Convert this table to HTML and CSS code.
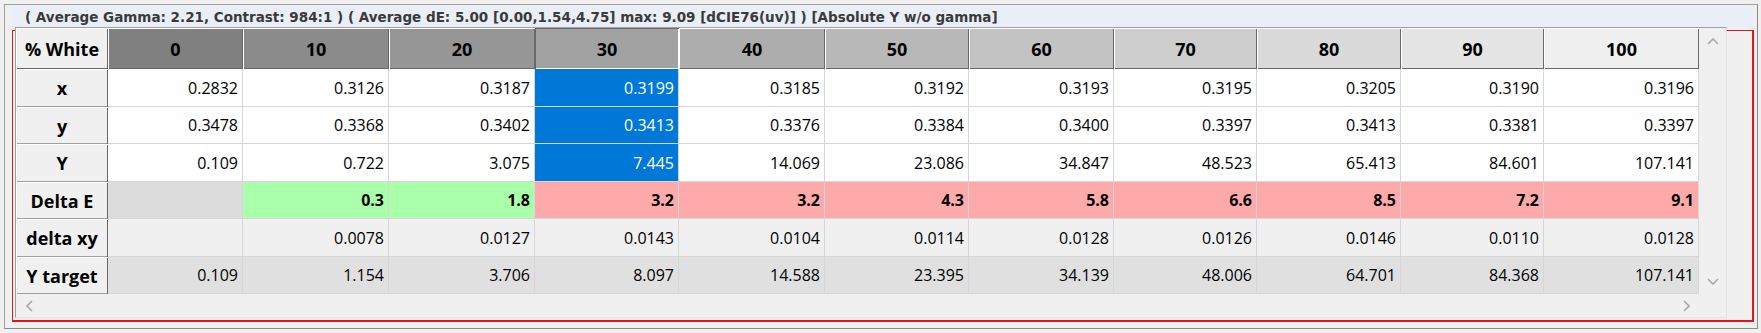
FILE: index.html
```html
<!DOCTYPE html>
<html>
<head>
<meta charset="utf-8">
<link rel="stylesheet" href="styles.css">
</head>
<body>
<div class="window">
  <div class="band">( Average Gamma: 2.21, Contrast: 984:1 ) ( Average dE: 5.00 [0.00,1.54,4.75] max: 9.09 [dCIE76(uv)] ) [Absolute Y w/o gamma]</div>
  <div class="redbox">
    <div class="tablewidget">
      <div class="grid">
        <div class="c corner-h">% White</div>
        <div class="c h g0">0</div>
        <div class="c h g1">10</div>
        <div class="c h g2">20</div>
        <div class="c h g3 sunk">30</div>
        <div class="c h g4">40</div>
        <div class="c h g5">50</div>
        <div class="c h g6">60</div>
        <div class="c h g7">70</div>
        <div class="c h g8">80</div>
        <div class="c h g9">90</div>
        <div class="c h g10">100</div>

        <div class="c rh">x</div>
        <div class="c w">0.2832</div><div class="c w">0.3126</div><div class="c w">0.3187</div><div class="c sel">0.3199</div><div class="c w">0.3185</div><div class="c w">0.3192</div><div class="c w">0.3193</div><div class="c w">0.3195</div><div class="c w">0.3205</div><div class="c w">0.3190</div><div class="c w">0.3196</div>

        <div class="c rh">y</div>
        <div class="c w">0.3478</div><div class="c w">0.3368</div><div class="c w">0.3402</div><div class="c sel">0.3413</div><div class="c w">0.3376</div><div class="c w">0.3384</div><div class="c w">0.3400</div><div class="c w">0.3397</div><div class="c w">0.3413</div><div class="c w">0.3381</div><div class="c w">0.3397</div>

        <div class="c rh">Y</div>
        <div class="c w">0.109</div><div class="c w">0.722</div><div class="c w">3.075</div><div class="c sel">7.445</div><div class="c w">14.069</div><div class="c w">23.086</div><div class="c w">34.847</div><div class="c w">48.523</div><div class="c w">65.413</div><div class="c w">84.601</div><div class="c w">107.141</div>

        <div class="c rh">Delta E</div>
        <div class="c de-none"></div><div class="c de good">0.3</div><div class="c de good">1.8</div><div class="c de bad">3.2</div><div class="c de bad">3.2</div><div class="c de bad">4.3</div><div class="c de bad">5.8</div><div class="c de bad">6.6</div><div class="c de bad">8.5</div><div class="c de bad">7.2</div><div class="c de bad">9.1</div>

        <div class="c rh">delta xy</div>
        <div class="c lg"></div><div class="c lg">0.0078</div><div class="c lg">0.0127</div><div class="c lg">0.0143</div><div class="c lg">0.0104</div><div class="c lg">0.0114</div><div class="c lg">0.0128</div><div class="c lg">0.0126</div><div class="c lg">0.0146</div><div class="c lg">0.0110</div><div class="c lg">0.0128</div>

        <div class="c rh">Y target</div>
        <div class="c mg">0.109</div><div class="c mg">1.154</div><div class="c mg">3.706</div><div class="c mg">8.097</div><div class="c mg">14.588</div><div class="c mg">23.395</div><div class="c mg">34.139</div><div class="c mg">48.006</div><div class="c mg">64.701</div><div class="c mg">84.368</div><div class="c mg">107.141</div>
      </div>
      <div class="vscroll">
        <div class="btn"><svg width="12" height="7" viewBox="0 0 12 7"><polyline points="1,6 6,1 11,6" class="chev"/></svg></div>
        <div class="btn"><svg width="12" height="7" viewBox="0 0 12 7"><polyline points="1,1 6,6 11,1" class="chev"/></svg></div>
      </div>
      <div class="hscroll">
        <div class="btn"><svg width="7" height="12" viewBox="0 0 7 12"><polyline points="6,1 1,6 6,11" class="chev"/></svg></div>
        <div class="btn"><svg width="7" height="12" viewBox="0 0 7 12"><polyline points="1,1 6,6 1,11" class="chev"/></svg></div>
      </div>
      <div class="sizer"></div>
    </div>
  </div>
</div>
</body>
</html>
```

FILE: styles.css
```css
* { box-sizing: border-box; }
html, body { margin: 0; padding: 0; }
body {
  width: 1761px;
  height: 333px;
  overflow: hidden;
  background: #f0f0f0;
  font-family: "Open Sans", "Noto Sans", sans-serif;
  color: #000;
}
.window {
  margin: 4px 3px 4px 4px;
  height: 325px;
  border: 1px solid #a0a0a0;
  border-right-color: #8a8a8a;
  border-bottom-color: #8a8a8a;
  padding: 1px 3px 0 7px;
}
.band {
  height: 22px;
  margin-right: 2px;
  background: #e9eef7;
  border-top-right-radius: 5px;
  padding-left: 13px;
  font-family: "DejaVu Sans", sans-serif;
  font-size: 13.5px;
  font-weight: 700;
  line-height: 22px;
  color: #3a3a3a;
  white-space: nowrap;
  overflow: hidden;
}
.redbox {
  margin-top: 2px;
  height: 292px;
  border: 1px solid #e4161c;
  border-right-width: 2px;
  border-bottom-width: 2px;
}
.tablewidget {
  margin: -4px 25px 0 2px;
  height: 291px;
  border: 1px solid;
  border-color: #a0a0a0 #e3e3e3 #e3e3e3 #a0a0a0;
  background: #f0f0f0;
  display: grid;
  grid-template-columns: 1683px 27px;
  grid-template-rows: 266px 23px;
}
.grid {
  display: grid;
  grid-template-columns: 92px 135px 146px 146px 144px 146px 144px 145px 143px 144px 143px 155px;
  grid-template-rows: 41px 38px 37px 38px 37px 38px 37px;
  background: #fff;
}
.c {
  display: flex;
  align-items: center;
  justify-content: flex-end;
  padding-right: 4px;
  border-right: 1px solid #d6d6d6;
  border-bottom: 1px solid #d6d6d6;
  font-size: 16px;
  white-space: nowrap;
}
.h, .corner-h, .rh {
  justify-content: center;
  padding-right: 0;
  font-weight: 700;
  font-size: 18px;
  border: none;
}
.h { box-shadow: inset 1px 1px 0 #fff, inset -1px -1px 0 #696969; }
.h.sunk { box-shadow: inset 1px 1px 0 #696969, inset -1px -1px 0 #fff; }
.corner-h { background: #f0f0f0; box-shadow: inset 1px 1px 0 #fff, inset -1px -1px 0 #696969; }
.rh { background: #f0f0f0; box-shadow: inset 1px 1px 0 #fff, inset -1px 0 0 #696969, inset 0 -1px 0 #a0a0a0; }
.g0 { background: #808080; }
.g1 { background: #8b8b8b; }
.g2 { background: #969696; }
.g3 { background: #a2a2a2; }
.g4 { background: #adadad; }
.g5 { background: #b8b8b8; }
.g6 { background: #c3c3c3; }
.g7 { background: #cecece; }
.g8 { background: #dadada; }
.g9 { background: #e5e5e5; }
.g10 { background: #f0f0f0; }
.w { background: #fff; }
.sel { background: #0078d7; color: #fff; }
.de { font-weight: 700; }
.de-none { background: #dcdcdc; }
.good { background: #aaffaa; }
.bad { background: #ffaaaa; }
.lg { background: #f0f0f0; }
.mg { background: #e0e0e0; }
.vscroll {
  display: flex;
  flex-direction: column;
  justify-content: space-between;
  background: #f0f0f0;
}
.vscroll .btn { height: 26px; display: flex; align-items: center; justify-content: center; }
.hscroll {
  display: flex;
  justify-content: space-between;
  background: #f0f0f0;
}
.hscroll .btn { width: 26px; display: flex; align-items: center; justify-content: center; }
.chev { fill: none; stroke: #a8a8a8; stroke-width: 1.6; }
.sizer { background: #f0f0f0; }
```
